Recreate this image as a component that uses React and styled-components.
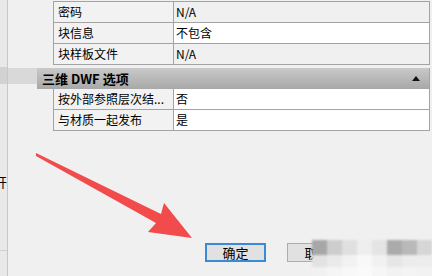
import React from "react"
import styled, { createGlobalStyle } from "styled-components"

const GlobalStyle = createGlobalStyle`
  html, body {
    margin: 0;
    padding: 0;
    background: #f0f0f0;
  }
  body {
    font-family: "Noto Sans CJK SC", "Noto Sans", sans-serif;
    font-size: 12px;
    color: #000;
  }
  #root {
    width: 432px;
    height: 276px;
  }
`

const Page = styled.div`
  position: relative;
  display: flex;
  width: 432px;
  height: 276px;
  overflow: hidden;
  background: #f0f0f0;
`

/* window edge behind the dialog */
const SideStrip = styled.div`
  flex: none;
  width: 7px;
  display: flex;
  flex-direction: column;
  background: #e9e9e9;
  border-right: 1px solid #c4c8ce;
`

const StripGap = styled.div`
  flex: ${(p) => (p.$grow ? 1 : "none")};
  height: ${(p) => p.$h || 0}px;
`

const StripBand = styled.div`
  flex: none;
  height: 17px;
  background: #d2d2d2;
`

const StripGlyph = styled.div`
  flex: none;
  height: 14px;
  display: flex;
  justify-content: flex-end;
  align-items: center;
  overflow: hidden;
  font-size: 13px;
  line-height: 14px;
  white-space: nowrap;
`

const StripRule = styled.div`
  flex: none;
  height: 25px;
  border-top: 1px solid #cfd2d6;
`

const Main = styled.div`
  flex: 1;
  display: flex;
  flex-direction: column;
`

const Rows = styled.div`
  margin-left: 45px;
  margin-top: ${(p) => p.$top || 0}px;
  width: 376px;
  border-right: 1px solid #a3a3a3;
  border-top: ${(p) => (p.$open ? "1px solid #a3a3a3" : "none")};
`

const Row = styled.div`
  display: grid;
  grid-template-columns: 120px 1fr;
  height: 21px;
`

const Cell = styled.div`
  box-sizing: border-box;
  height: 21px;
  border-left: 1px solid #a3a3a3;
  border-bottom: 1px solid #a3a3a3;
  padding-left: ${(p) => (p.$label ? 4 : 2)}px;
  background: ${(p) => (p.$editable ? "#ffffff" : p.$label ? "#f2f2f2" : "#f0f0f0")};
  line-height: 20px;
  white-space: nowrap;
  overflow: hidden;
`

const SectionRow = styled.div`
  display: flex;
  margin-top: 3px;
`

const GutterBand = styled.div`
  flex: none;
  width: 29px;
  height: 16px;
  background: #d9d9d9;
`

const SectionHeader = styled.div`
  box-sizing: border-box;
  width: 393px;
  height: 21px;
  display: flex;
  align-items: center;
  justify-content: space-between;
  padding: 0 9px 0 5px;
  background: linear-gradient(#c9c9c9, #a8a8a8);
  border-right: 1px solid #a3a3a3;
  font-size: 13px;
  font-weight: 700;
  line-height: 21px;
`

const CollapseArrow = styled.span`
  width: 0;
  height: 0;
  border-left: 4px solid transparent;
  border-right: 4px solid transparent;
  border-bottom: 5px solid #111;
`

const ButtonRow = styled.div`
  display: flex;
  gap: 21px;
  margin-top: 112px;
  margin-left: 197px;
`

const Button = styled.button`
  box-sizing: border-box;
  width: 61px;
  height: 19px;
  padding: 0;
  background: #e1e1e1;
  border: ${(p) => (p.$primary ? "2px solid #3a8ad6" : "1px solid #adadad")};
  font-family: "Noto Sans CJK SC", sans-serif;
  font-size: 13px;
  line-height: 15px;
  color: #000;
`

const ArrowLayer = styled.svg`
  position: absolute;
  left: 0;
  top: 0;
  width: 432px;
  height: 276px;
  pointer-events: none;
`

/* pixelated watermark over the second button */
const Mosaic = styled.div`
  position: absolute;
  left: 312px;
  top: 240px;
  display: grid;
  grid-template-columns: repeat(8, 15px);
  grid-template-rows: 15px 12px 12px;
  filter: blur(1.2px);
  pointer-events: none;
`

const Tile = styled.div`
  background: ${(p) => p.$c};
`

const mosaicTiles = [
  "#a7a7a7", "#cdcdcd", "#e0e0e0", "#eeeeee", "#e4e4e4", "#ababab", "#b9b9b9", "#d6d6d6",
  "#e2e2e2", "#eaeaea", "#f2f2f2", "#f8f8f8", "#f1f1f1", "#e6e6e6", "#ececec", "#ededed",
  "#f1f1f1", "#f5f5f5", "#f8f8f8", "#fafafa", "#f6f6f6", "#f2f2f2", "#f4f4f4", "#f2f2f2",
]

const topRows = [
  { label: "密码", value: "N/A", editable: false },
  { label: "块信息", value: "不包含", editable: true },
  { label: "块样板文件", value: "N/A", editable: false },
]

const dwfRows = [
  { label: "按外部参照层次结...", value: "否", editable: true },
  { label: "与材质一起发布", value: "是", editable: true },
]

export default function App() {
  return (
    <>
      <GlobalStyle />
      <Page>
        <SideStrip>
          <StripGap $h={67} />
          <StripBand />
          <StripGap $h={91} />
          <StripGlyph>开</StripGlyph>
          <StripGap $grow />
          <StripRule />
        </SideStrip>

        <Main>
          <Rows $open $top={1}>
            {topRows.map((r) => (
              <Row key={r.label}>
                <Cell $label>{r.label}</Cell>
                <Cell $editable={r.editable}>{r.value}</Cell>
              </Row>
            ))}
          </Rows>

          <SectionRow>
            <GutterBand />
            <SectionHeader>
              <span>三维 DWF 选项</span>
              <CollapseArrow />
            </SectionHeader>
          </SectionRow>

          <Rows>
            {dwfRows.map((r) => (
              <Row key={r.label}>
                <Cell $label>{r.label}</Cell>
                <Cell $editable={r.editable}>{r.value}</Cell>
              </Row>
            ))}
          </Rows>

          <ButtonRow>
            <Button $primary>确定</Button>
            <Button>取消</Button>
          </ButtonRow>
        </Main>

        <ArrowLayer viewBox="0 0 432 276">
          <polygon
            points="36,153 161,214 164,203 192,238 148,232 156,223 36,156"
            fill="#f24b4b"
          />
        </ArrowLayer>

        <Mosaic>
          {mosaicTiles.map((c, i) => (
            <Tile key={i} $c={c} />
          ))}
        </Mosaic>
      </Page>
    </>
  )
}
